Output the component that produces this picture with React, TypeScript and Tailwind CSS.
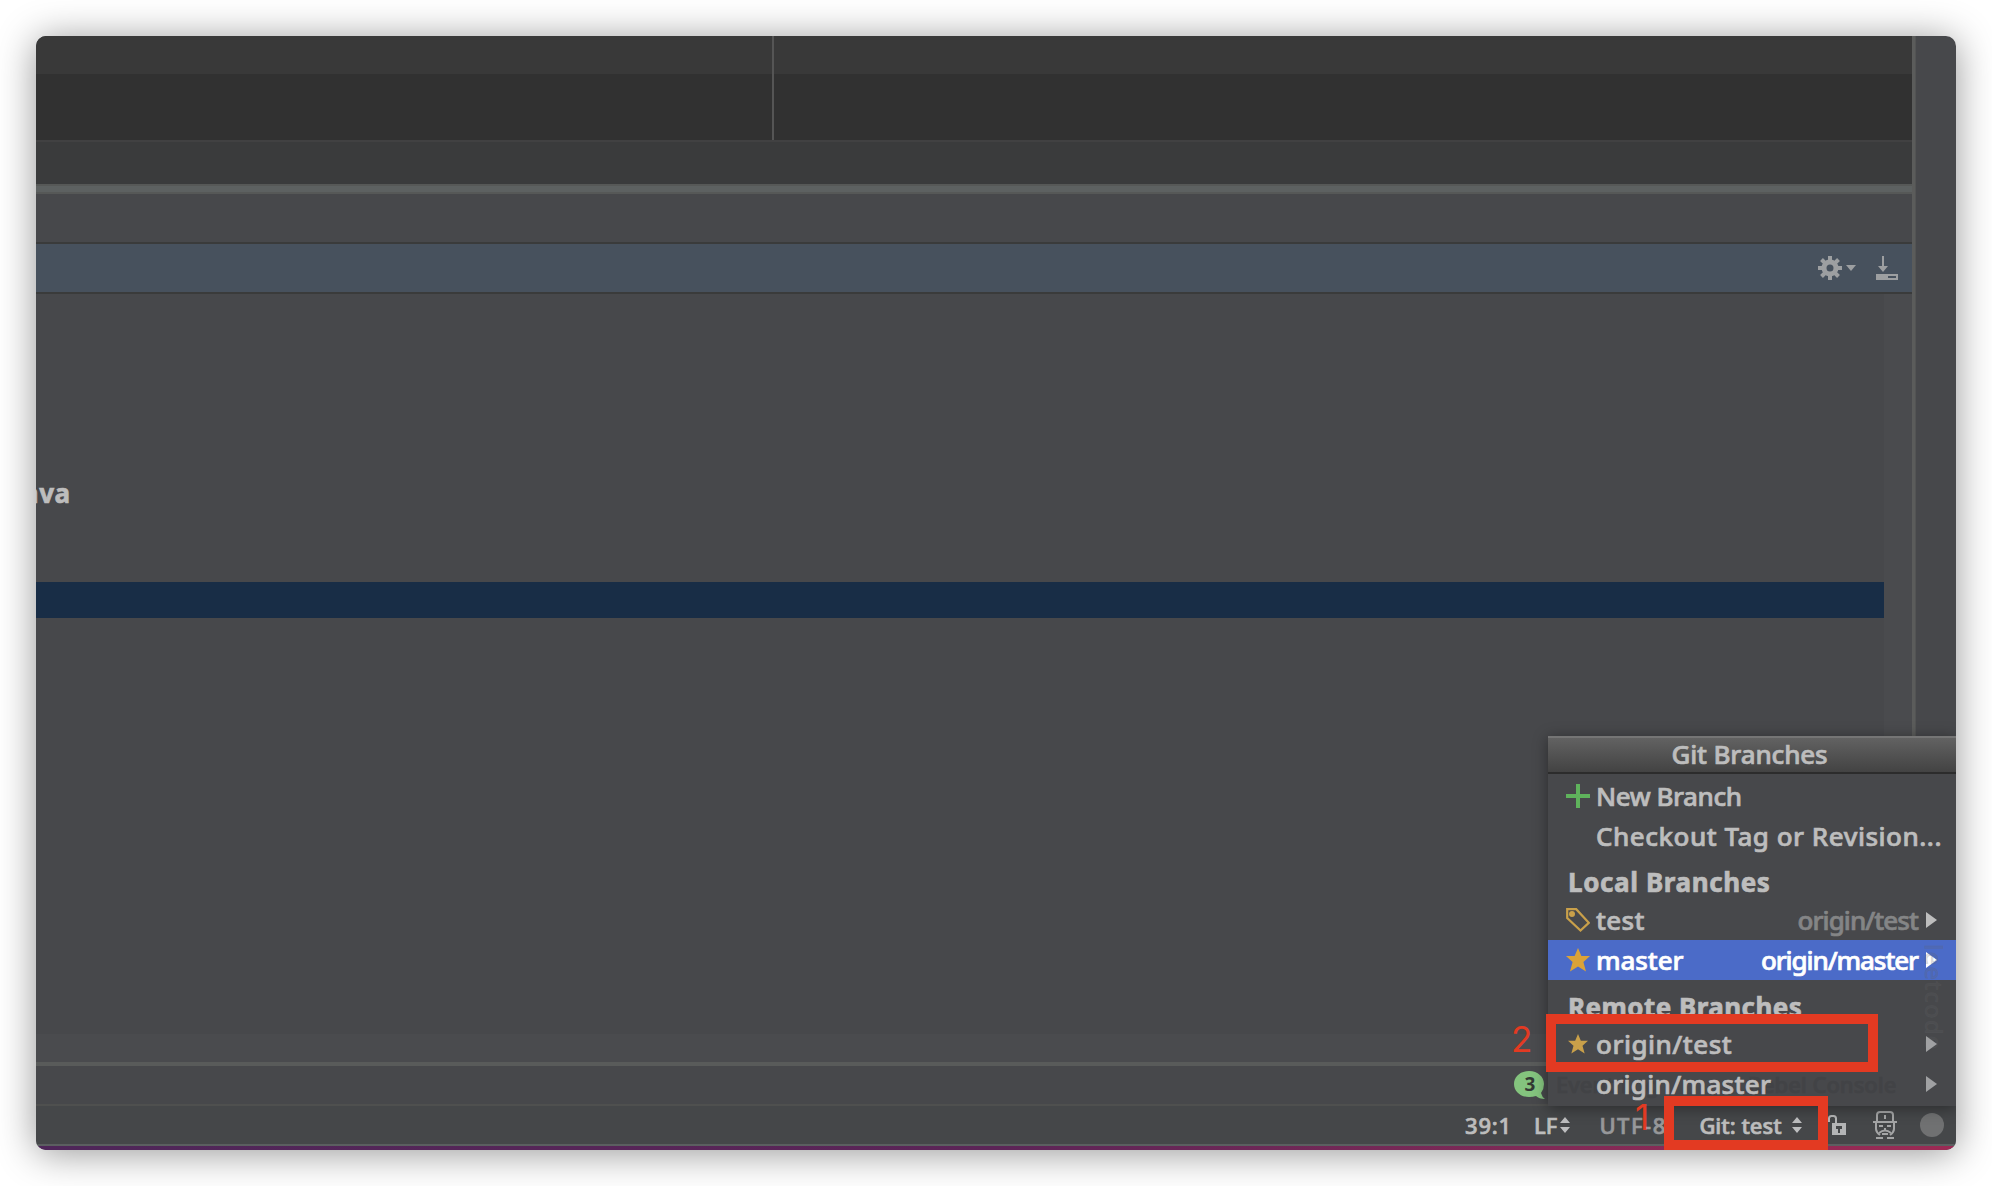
import { clsx } from "clsx";

type IconProps = { className?: string };

function GearIcon({ className }: IconProps) {
  return (
    <svg className={className} viewBox="0 0 24 24" fill="none">
      <circle cx="12" cy="12" r="6" stroke="#9d9fa1" strokeWidth="5" />
      <g stroke="#9d9fa1" strokeWidth="4">
        <path d="M12 0v5M12 19v5M0 12h5M19 12h5" />
        <path d="M3.5 3.5l3.5 3.5M17 17l3.5 3.5M20.5 3.5L17 7M7 17l-3.5 3.5" />
      </g>
    </svg>
  );
}

function HideIcon({ className }: IconProps) {
  return (
    <svg className={className} viewBox="0 0 22 24" fill="#9d9fa1">
      <path d="M6 0h2v10h4l-5 6l-5-6h4z" />
      <path fillRule="evenodd" d="M0 18h22v6H0zM12 20v2h8v-2z" />
    </svg>
  );
}

function StarIcon({ className }: IconProps) {
  return (
    <svg className={className} viewBox="0 0 24 24" fill="currentColor">
      <path d="M12 0l3.4 8H24l-6.6 6L20 23.5L12 18.4L4 23.5L6.6 14L0 8h8.6z" />
    </svg>
  );
}

function TagIcon({ className }: IconProps) {
  return (
    <svg className={className} viewBox="0 0 24 24" fill="none">
      <path d="M1.2 1.2h9L22.8 14.8L14.5 22.5L1.2 10z" stroke="#c9a04a" strokeWidth="2.2" />
      <circle cx="6" cy="6" r="3" fill="#c9a04a" />
    </svg>
  );
}

function PlusIcon({ className }: IconProps) {
  return (
    <svg className={className} viewBox="0 0 24 24">
      <path d="M12 0v24M0 12h24" stroke="#5fb35c" strokeWidth="4" />
    </svg>
  );
}

function UpDown({ className }: IconProps) {
  return (
    <svg className={className} viewBox="0 0 10 16" fill="#bdbebf">
      <path d="M5 0l5 6H0zM5 16l5-6H0z" />
    </svg>
  );
}

function LockIcon({ className }: IconProps) {
  return (
    <svg className={className} viewBox="0 0 18 20" fill="none">
      <path d="M1 7V3.5Q1 1 3.5 1H5.5Q8 1 8 3.5V8" stroke="#b4b5b6" strokeWidth="2" />
      <path fillRule="evenodd" fill="#b4b5b6" d="M4 8h14v12H4zM8 11v3h2v4h2v-4h2v-3z" />
    </svg>
  );
}

function InspectorIcon({ className }: IconProps) {
  return (
    <svg className={className} viewBox="0 0 24 28" fill="none" stroke="#a4a5a6" strokeWidth="2">
      <path d="M4 10V4Q4 1 7 1h10q3 0 3 3v6M0 11h24M12 4v4M3 12v6q0 3 4 6M21 12v6q0 3-4 6" />
      <path d="M6 15h4M14 15h4M11 18h2M6 22q6-5 12 0M9 23h6M3 27h7M14 27h7" />
    </svg>
  );
}

function Bubble({ className }: IconProps) {
  return (
    <svg className={className} viewBox="0 0 32 28">
      <path d="M15 0C24 0 30 6 30 13q0 5-3 9q1 4 4 6q-6 0-9-3q-3 1-7 1C6 26 0 20 0 13S6 0 15 0z" fill="#84c47e" />
      <text x="16" y="20" textAnchor="middle" fontSize="19" fontWeight="700" fill="#333a34" fontFamily="Noto Sans, sans-serif">3</text>
    </svg>
  );
}

function Submenu({ className }: IconProps) {
  return (
    <svg className={clsx("w-[11px] h-4 shrink-0", className)} viewBox="0 0 11 16" fill="currentColor">
      <path d="M0 0l11 8L0 16z" />
    </svg>
  );
}

function Popup() {
  return (
    <div className="absolute left-[1512px] top-[700px] w-[408px] h-[370px] bg-[#47484b] text-[#bdbdbd] text-[26px] leading-[36px] shadow-[0_2px_14px_rgba(0,0,0,0.4)]">
      {/* Tool window labels showing faintly through the popup */}
      <span className="absolute left-[8px] top-[330px] text-[#424346] text-[22px]">Event Log</span>
      <span className="absolute left-[200px] top-[330px] text-[#424346] text-[22px]">Rebel Console</span>
      <div className="h-[38px] border-t-2 border-b-2 border-t-[#757575] border-b-[#2c2c2c] bg-linear-to-b from-[#626262] to-[#434343] flex items-center justify-center">
        <span className="pr-[5px] pb-[2px] tracking-[-0.15px]">Git Branches</span>
      </div>
      <div className="h-[44px] flex items-center pl-[18px] gap-[6px]">
        <PlusIcon className="w-6 h-6" />
        <span className="tracking-[-0.45px]">New Branch</span>
      </div>
      <div className="h-[36px] flex items-center pl-12">
        <span className="tracking-[0.5px]">Checkout Tag or Revision...</span>
      </div>
      <div className="h-[46px] pt-[10px] flex items-center pl-[20px] font-bold">
        <span className="tracking-[0.6px]">Local Branches</span>
      </div>
      <div className="h-[40px] flex items-center pl-[18px] pr-[19px]">
        <TagIcon className="w-6 h-6 mr-[6px]" />
        <span className="tracking-[0.3px]">test</span>
        <span className="ml-auto mr-2 text-[#848586] tracking-[-0.95px]">origin/test</span>
        <Submenu />
      </div>
      <div className="relative h-10 bg-[#4b6bc8] text-white flex items-center pl-[18px] pr-[19px]">
        <StarIcon className="w-6 h-6 mr-[6px] text-[#dba338]" />
        <span className="tracking-[-0.1px]">master</span>
        <span className="ml-auto mr-2 tracking-[-1.1px]">origin/master</span>
        <Submenu />
      </div>
      <span className="absolute left-[372px] top-[208px] text-[#636466]/20 text-[24px] leading-7 tracking-[1px] [writing-mode:vertical-rl]">leetcode</span>
      <div className="relative h-[44px] flex items-center pl-[20px] pt-[10px] font-bold">
        <span className="tracking-[0.45px]">Remote Branches</span>
      </div>
      <div className="relative h-10 flex items-center pl-5 pr-[19px]">
        <StarIcon className="w-5 h-5 mr-2 text-[#c9a04a]" />
        <span className="tracking-[0.5px]">origin/test</span>
        <Submenu className="ml-auto text-[#a0a1a3]" />
      </div>
      <div className="relative h-10 flex items-center pl-12 pr-[19px]">
        <span className="tracking-[0.3px]">origin/master</span>
        <Submenu className="ml-auto text-[#a0a1a3]" />
      </div>
    </div>
  );
}

export default function App() {
  return (
    <div className="w-[1992px] h-[1186px] bg-white p-9 overflow-hidden font-['Noto_Sans',sans-serif] font-medium whitespace-nowrap">
      <div className="relative w-[1920px] h-[1114px] rounded-[10px] shadow-[0_3px_38px_rgba(0,0,0,0.42)]">
        <div className="relative w-full h-full rounded-[10px] overflow-hidden bg-[#47484b] flex flex-col [-webkit-text-stroke:0.7px]">
          <div className="h-[1026px] flex">
            <div className="w-[1876px] flex flex-col">
              <div className="h-[104px] flex">
                <div className="w-[738px] border-r-2 border-[#555555] flex flex-col">
                  <div className="h-[38px] bg-[#393939]" />
                  <div className="flex-1 bg-[#313131]" />
                </div>
                <div className="flex-1 flex flex-col">
                  <div className="h-[38px] bg-[#393939]" />
                  <div className="flex-1 bg-[#313131]" />
                </div>
              </div>
              <div className="h-[44px] border-t-2 border-[#414142] bg-[#3a3b3c]" />
              <div className="h-[10px] border-y-2 border-[#565857] bg-[#5d6161]" />
              <div className="h-12" />
              <div className="h-[52px] border-y-2 border-[#3a3b3b] bg-[#47515d] flex items-center justify-end pr-[14px]">
                <GearIcon className="w-6 h-6" />
                <svg className="w-[10px] h-[6px] ml-1 mr-5" viewBox="0 0 10 6">
                  <path d="M0 0h10L5 6z" fill="#9d9fa1" />
                </svg>
                <HideIcon className="w-[22px] h-6" />
              </div>
              <div className="flex-1 flex">
                <div className="w-[1848px] flex flex-col">
                  <div className="h-[288px] pt-[179px] overflow-hidden">
                    <div className="-ml-[13px] text-[26px] leading-[40px] font-bold text-[#bdbdbd] tracking-[0.6px]">ava</div>
                  </div>
                  <div className="h-9 bg-[#182d46]" />
                </div>
                <div className="flex-1 bg-[#4a4b4e]" />
              </div>
              <div className="h-7 bg-[#4a4b4e]" />
            </div>
            <div className="w-1 bg-[#5b5c5b] border-r border-[#535454]" />
            <div className="flex-1" />
          </div>
          <div className="h-1 bg-[#595b5a]" />
          <div className="h-[38px] flex items-center pl-[1478px]">
            <Bubble className="w-8 h-7" />
          </div>
          <div className="h-[42px] border-y-2 border-t-[#4f504f] border-b-[#5b5f60] bg-[#454749] flex items-center text-[22px] text-[#bdbdbd] pl-[1429px]">
            <span className="w-[69px] tracking-[0.8px]">39:1</span>
            <span>LF</span>
            <UpDown className="w-[10px] h-4 ml-[3px]" />
            <span className="ml-[29px] w-[100px] tracking-[1.5px] text-[#97989a]">UTF-8</span>
            <span>Git: test</span>
            <UpDown className="w-[10px] h-4 ml-[10px]" />
            <LockIcon className="w-[18px] h-5 ml-[26px]" />
            <InspectorIcon className="w-6 h-7 ml-[27px]" />
            <span className="w-6 h-6 rounded-full bg-[#707172] ml-[23px]" />
          </div>
          <div className="h-1 bg-linear-to-r from-[#4e2659] via-[#5c2457] to-[#9c2a54]" />
          <Popup />
        </div>
        {/* Step markers */}
        <div className="absolute left-[1510px] top-[978px] w-[332px] h-[58px] border-[10px] border-[#e33a22]" />
        <div className="absolute left-[1628px] top-[1060px] w-[164px] h-[54px] border-[10px] border-[#e33a22]" />
        <span className="absolute left-[1475px] top-[979px] text-[35px] leading-[48px] text-[#e33a22] font-['Inter',sans-serif] font-normal">2</span>
        <span className="absolute left-[1599px] top-[1057px] text-[35px] leading-[48px] text-[#e33a22] font-['Inter',sans-serif] font-normal">1</span>
      </div>
    </div>
  );
}
